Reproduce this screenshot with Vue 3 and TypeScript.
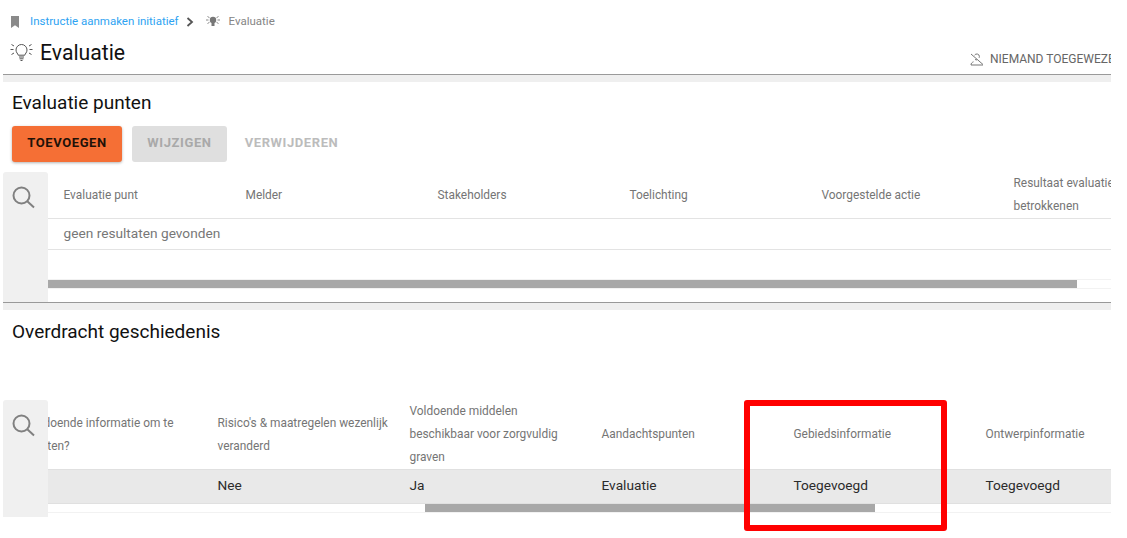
<script setup lang="ts">
const firstCols: string[] = ['Evaluatie punt', 'Melder', 'Stakeholders', 'Toelichting', 'Voorgestelde actie', 'Resultaat evaluatie betrokkenen']
const secondCols: { title: string; value: string }[] = [
  { title: 'Voldoende informatie om te starten?', value: '' },
  { title: "Risico's & maatregelen wezenlijk veranderd", value: 'Nee' },
  { title: 'Voldoende middelen beschikbaar voor zorgvuldig graven', value: 'Ja' },
  { title: 'Aandachtspunten', value: 'Evaluatie' },
  { title: 'Gebiedsinformatie', value: 'Toegevoegd' },
  { title: 'Ontwerpinformatie', value: 'Toegevoegd' },
]
</script>

<template>
  <div class="page">
    <header class="head">
      <nav class="crumbs">
        <svg class="bookmark" width="10" height="12" viewBox="0 0 10 12"><path d="M1 0h8v12L5 9.200 1 12z" fill="#8a8a8a" /></svg>
        <a class="crumb-link">Instructie aanmaken initiatief</a>
        <svg class="chev" width="10" height="10" viewBox="0 0 10 10"><path d="M2.500 1l4.500 4-4.500 4" fill="none" stroke="#555" stroke-width="1.800" /></svg>
        <svg class="bulb-small" width="16" height="12" viewBox="0 0 16 12">
          <circle cx="8" cy="5" r="3.200" fill="#777" /><rect x="6.500" y="8" width="3" height="3" fill="#777" />
          <path d="M1 5h2.500M12.500 5H15M2.500 1.500l2 1.200M13.500 1.500l-2 1.200M2.500 8.500l2-1.200M13.500 8.500l-2-1.200" stroke="#888" stroke-width="1" />
        </svg>
        <span class="crumb-current">Evaluatie</span>
      </nav>
      <div class="title-row">
        <div class="title-left">
          <svg width="23" height="20" viewBox="0 0 23 20" fill="none" stroke="#555" stroke-width="1">
            <path d="M8.200 13.200c-.2-1.600-2.200-2.500-2.200-5.200a5.500 5.500 0 0 1 11 0c0 2.700-2 3.600-2.200 5.200z" />
            <path d="M9 15h5M9.500 16.800h4M10.500 18.500h2" />
            <path d="M0.500 7.500h3M19.500 7.500h3M1.500 2.500l2.500 1.500M21.500 2.500l-2.500 1.500M1.500 12.500l2.500-1.500M21.500 12.500l-2.500-1.500" />
          </svg>
          <h1>Evaluatie</h1>
        </div>
        <div class="assignee">
          <svg width="14" height="13" viewBox="0 0 14 13" fill="none" stroke="#777" stroke-width="1">
            <path d="M4.600 2.200a2.600 2.600 0 0 1 4.800 1.300c0 .5-.1 1-.4 1.400" />
            <path d="M5 6.400c.6.400 1.300.6 2 .5" />
            <path d="M3.500 8.800C2 9.400 1 10.300 1 12h12" /><path d="M1 1l12 10.500" />
          </svg>
          <span>NIEMAND TOEGEWEZEN</span>
        </div>
      </div>
    </header>
    <div class="band"></div>

    <section class="section">
      <h2>Evaluatie punten</h2>
      <div class="actions">
        <button class="btn primary">TOEVOEGEN</button>
        <button class="btn disabled">WIJZIGEN</button>
        <button class="btn flat">VERWIJDEREN</button>
      </div>
      <div class="table-wrap first">
        <aside class="search">
          <svg width="24" height="24" viewBox="0 0 24 24" fill="none" stroke="#808080" stroke-width="2"><circle cx="9.500" cy="9.500" r="8" /><path d="M15.300 15.300l6.700 6.200" /></svg>
        </aside>
        <div class="table">
          <div class="row-head cols-first">
            <div v-for="c in firstCols" :key="c" class="th">{{ c }}</div>
          </div>
          <div class="empty">geen resultaten gevonden</div>
          <div class="spacer"></div>
          <div class="scroll"><div class="thumb thumb-first"></div></div>
        </div>
      </div>
    </section>
    <div class="band"></div>

    <section class="section">
      <h2 class="h2-second">Overdracht geschiedenis</h2>
      <div class="table-wrap second">
        <aside class="search">
          <svg width="24" height="24" viewBox="0 0 24 24" fill="none" stroke="#808080" stroke-width="2"><circle cx="9.500" cy="9.500" r="8" /><path d="M15.300 15.300l6.700 6.200" /></svg>
        </aside>
        <div class="table">
          <div class="shifted">
            <div class="row-head tall cols-second">
              <div v-for="c in secondCols" :key="c.title" class="th narrow">{{ c.title }}</div>
            </div>
            <div class="row-data cols-second">
              <div v-for="c in secondCols" :key="c.title" class="td">{{ c.value }}</div>
            </div>
          </div>
          <div class="scroll short"><div class="thumb thumb-second"></div></div>
        </div>
      </div>
    </section>
    <div class="highlight"></div>
  </div>
</template>

<style>
html, body { background: #fff; overflow: hidden; }
</style>

<style scoped>
.page {
  position: relative;
  width: 1108px;
  height: 538px;
  margin-left: 3px;
  font-family: Roboto, "Liberation Sans", sans-serif;
  color: #1c1c1c;
}
.head { height: 75px; border-bottom: 1px solid #9a9a9a; box-sizing: border-box; }
.crumbs { display: flex; align-items: center; height: 14px; padding: 14px 0 0 7px; font-size: 11.500px; }
.bookmark { margin-right: 10px; margin-top: 2px; }
.crumb-link { color: #2ea3f2; margin-right: 6px; }
.chev { margin-right: 10px; margin-top: 2px; }
.bulb-small { margin-right: 8px; }
.crumb-current { color: #858585; }
.title-row { display: flex; justify-content: space-between; align-items: flex-start; margin-top: 7px; }
.title-left { display: flex; align-items: center; gap: 7px; padding-left: 7px; height: 34px; }
h1 { margin: 0; font-size: 21.200px; font-weight: 400; color: #111; }
.assignee {
  display: flex; align-items: center; gap: 6px;
  margin-top: 17px; width: 141px; overflow: hidden; white-space: nowrap;
  font-size: 12px; color: #666; flex: none;
}
.assignee svg { flex: none; }
.band { height: 7px; background: #efefef; }
h2 { margin: 0; padding: 8px 0 0 9px; height: 36px; font-size: 19px; line-height: 26px; font-weight: 400; color: #111; }
.h2-second { padding-top: 9px; height: 35px; }
.actions { display: flex; align-items: stretch; height: 36px; padding-left: 9px; }
.btn {
  border: 0; border-radius: 3px; font-family: inherit; font-size: 13px; font-weight: 700;
  letter-spacing: 0.6px; padding: 0 0 3px; height: 36px;
}
.primary { width: 110px; background: #f56f35; color: #1f1208; box-shadow: 0 1px 3px rgba(0,0,0,.3); }
.disabled { width: 95px; margin-left: 10px; background: #dfdfdf; color: #a9a9a9; }
.flat { margin-left: 16px; width: 97px; background: transparent; color: #bcbcbc; }
.table-wrap { display: flex; }
.first { height: 130px; margin-top: 10px; border-bottom: 1px solid #999; }
.second { height: 117px; margin-top: 46px; }
.search {
  flex: none; width: 45px; background: #f0f0f0; border-radius: 3px 3px 0 0;
  padding: 14px 0 0 9px; box-sizing: border-box;
}
.table { flex: 1; min-width: 0; overflow: hidden; }
.row-head { height: 46px; border-bottom: 1px solid #e3e3e3; }
.cols-first { display: grid; grid-template-columns: 182px repeat(5, 192px); }
.cols-second { display: grid; grid-template-columns: 191px repeat(5, 192px); }
.th {
  display: flex; align-items: center; padding: 0 16px 0 15.500px; font-size: 11.900px; line-height: 23px;
  color: #757575;
}
.narrow { padding-right: 4px; }
.empty {
  height: 30px; line-height: 29px; padding-left: 15.500px; font-size: 13.700px; color: #777;
  border-bottom: 1px solid #e3e3e3;
}
.spacer { height: 29px; }
.scroll { height: 8px; border-bottom: 1px solid #f2f2f2; border-top: 1px solid #f2f2f2; }
.thumb { height: 8px; background: #a8a8a8; }
.thumb-first { width: 1029px; }
.shifted { margin-left: -37px; width: 1200px; }
.tall { height: 69px; border-bottom: 1px solid #e0e0e0; }
.row-data { height: 33px; background: #e9e9e9; border-bottom: 1px solid #e0e0e0; }
.td { padding: 0 16px 0 15.500px; font-size: 13.700px; line-height: 31px; color: #2b2b2b; }
.short { border-top: 0; }
.thumb-second { width: 450px; margin-left: 377px; }
.highlight {
  position: absolute; left: 741px; top: 400px; width: 203px; height: 131px;
  border: 6px solid #ff0000; border-radius: 3px; box-sizing: border-box;
}
</style>
